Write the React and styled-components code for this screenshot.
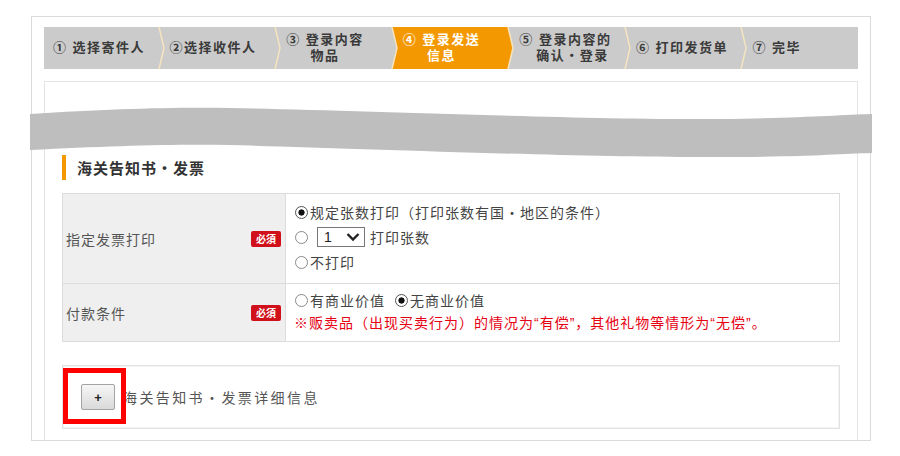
import React from 'react';
import styled, { createGlobalStyle } from 'styled-components';

const GlobalStyle = createGlobalStyle`
  html, body {
    margin: 0;
    padding: 0;
    background: #fff;
  }
  body {
    font-family: "Liberation Sans", "Noto Sans CJK SC", sans-serif;
    color: #444;
  }
`;

const Page = styled.div`
  padding: 16px 0 0 31px;
`;

const Frame = styled.div`
  position: relative;
  box-sizing: border-box;
  width: 840px;
  height: 425px;
  border: 1px solid #dadada;
  padding: 10px 12px 0;
  display: flex;
  flex-direction: column;
  gap: 12px;
`;

const Steps = styled.ol`
  list-style: none;
  margin: 0;
  padding: 0;
  display: flex;
  height: 42px;
`;

const Step = styled.li`
  position: relative;
  flex: 1;
  display: flex;
  align-items: center;
  padding-left: 11px;
  background: ${(p) => (p.$active ? '#f39800' : '#cbcbcb')};
  color: ${(p) => (p.$active ? '#fff' : '#3a3a3a')};
  font-size: 13px;
  font-weight: 700;
  line-height: 16px;
  letter-spacing: 1.5px;
  text-align: center;

  &:first-child {
    padding-left: 9px;
  }
`;

const Arrow = styled.svg`
  position: absolute;
  top: 0;
  right: -6px;
  z-index: 1;
  overflow: visible;
`;

// torn-page band drawn across the frame
const Band = styled.svg`
  position: absolute;
  left: -2px;
  top: 88px;
  z-index: 2;
`;

const Panel = styled.div`
  flex: 1;
  border: 1px solid #e4e4e4;
  border-bottom: none;
  padding: 73px 17px 0;
`;

const SectionTitle = styled.h3`
  margin: 0;
  height: 25px;
  display: flex;
  align-items: center;
  border-left: 4px solid #f39800;
  padding-left: 11px;
  font-size: 15px;
  font-weight: 700;
  color: #333;
  letter-spacing: 1px;
`;

const FormGrid = styled.div`
  margin-top: 13px;
  border: 1px solid #dcdcdc;
  font-size: 14px;
  letter-spacing: 1px;
`;

const Row = styled.div`
  display: grid;
  grid-template-columns: 223px 1fr;
  box-sizing: border-box;
  height: ${(p) => p.$h}px;
  border-bottom: ${(p) => (p.$last ? 'none' : '1px solid #dcdcdc')};
`;

const Label = styled.div`
  display: flex;
  align-items: center;
  justify-content: space-between;
  background: #efefef;
  border-right: 1px solid #dcdcdc;
  padding: 0 4px 0 3px;
  color: #555;
`;

const Badge = styled.span`
  display: inline-flex;
  align-items: center;
  justify-content: center;
  width: 30px;
  height: 16px;
  border-radius: 2px;
  background: #d0101b;
  color: #fff;
  font-size: 10px;
  font-weight: 700;
  letter-spacing: 0;
`;

const Value = styled.div`
  padding: ${(p) => p.$pt}px 0 0 9px;
  color: #444;
`;

const Line = styled.div`
  display: flex;
  align-items: center;
  height: ${(p) => p.$h}px;
  white-space: nowrap;
`;

const Radio = styled.span`
  display: inline-block;
  box-sizing: border-box;
  flex: none;
  width: 13px;
  height: 13px;
  border-radius: 50%;
  border: 1px solid ${(p) => (p.$checked ? '#555' : '#8a8a8a')};
  background: ${(p) =>
    p.$checked ? 'radial-gradient(circle, #111 0 2.8px, #fff 3.4px)' : '#fff'};
  margin: 0 2px 0 ${(p) => p.$ml || 0}px;
`;

const NumSelect = styled.span`
  display: inline-flex;
  align-items: center;
  justify-content: space-between;
  box-sizing: border-box;
  width: 48px;
  height: 20px;
  border: 1px solid #777;
  padding: 0 4px 0 6px;
  margin: 0 5px 0 7px;
  font-size: 14px;
  color: #222;
  letter-spacing: 0;
`;

const Note = styled.span`
  color: #e60012;
  margin-left: -1px;
`;

const DetailBox = styled.div`
  margin-top: 23px;
  height: 64px;
  box-sizing: border-box;
  border: 1px solid #e2e2e2;
  box-shadow: inset 0 0 0 1px #f3f3f3;
  display: flex;
  align-items: center;
  padding-left: 18px;
  gap: 8px;
  font-size: 14px;
  letter-spacing: 2.4px;
  color: #555;
`;

const ToggleWrap = styled.span`
  position: relative;
  display: inline-flex;
`;

const ToggleButton = styled.button`
  width: 34px;
  height: 26px;
  padding: 0;
  border: 1px solid #a3a3a3;
  border-radius: 2px;
  background: linear-gradient(#f6f6f6, #d9d9d9);
  color: #222;
  font-family: "Liberation Sans", sans-serif;
  font-size: 13px;
  font-weight: 700;
`;

const Highlight = styled.span`
  position: absolute;
  left: -18px;
  top: -16px;
  width: 63px;
  height: 56px;
  box-sizing: border-box;
  border: 5px solid #ff0000;
  z-index: 1;
`;

const steps = [
  ['① 选择寄件人'],
  ['②选择收件人'],
  ['③ 登录内容', '物品'],
  ['④ 登录发送', '信息'],
  ['⑤ 登录内容的', '　确认・登录'],
  ['⑥ 打印发货单'],
  ['⑦ 完毕'],
];

function StepArrow({ color }) {
  return (
    <Arrow width="8" height="42" viewBox="0 0 8 42">
      <polygon points="0,0 2,0 7,21 2,42 0,42" fill={color} />
      <polyline points="2,0 7,21 2,42" fill="none" stroke="#f6e4bf" strokeWidth="1.5" />
    </Arrow>
  );
}

function Chevron() {
  return (
    <svg width="14" height="10" viewBox="0 0 14 10">
      <polyline points="1.5,2 7,7.5 12.5,2" fill="none" stroke="#222" strokeWidth="2.4" />
    </svg>
  );
}

export default function App() {
  return (
    <>
      <GlobalStyle />
      <Page>
        <Frame>
          <Steps>
            {steps.map((lines, i) => {
              const active = i === 3;
              return (
                <Step key={i} $active={active}>
                  <span>
                    {lines.map((l, j) => (
                      <div key={j}>{l}</div>
                    ))}
                  </span>
                  {i < steps.length - 1 && <StepArrow color={active ? '#f39800' : '#cbcbcb'} />}
                </Step>
              );
            })}
          </Steps>

          <Band width="842" height="56" viewBox="0 0 842 56">
            <path
              d="M0,9 C80,4 140,2 200,3 C320,5 560,15 690,14 C770,13 810,10 842,9 L842,48 C810,49 770,52 690,52 C560,53 320,43 200,40 C140,39 80,41 0,45 Z"
              fill="#bebebe"
            />
          </Band>

          <Panel>
            <SectionTitle>海关告知书・发票</SectionTitle>

            <FormGrid>
              <Row $h={90}>
                <Label>
                  <span>指定发票打印</span>
                  <Badge>必須</Badge>
                </Label>
                <Value $pt={6}>
                  <Line $h={24}>
                    <Radio $checked />
                    规定张数打印（打印张数有国・地区的条件）
                  </Line>
                  <Line $h={26}>
                    <Radio />
                    <NumSelect>
                      1
                      <Chevron />
                    </NumSelect>
                    打印张数
                  </Line>
                  <Line $h={24}>
                    <Radio />
                    不打印
                  </Line>
                </Value>
              </Row>
              <Row $h={57} $last>
                <Label>
                  <span>付款条件</span>
                  <Badge>必須</Badge>
                </Label>
                <Value $pt={5}>
                  <Line $h={22}>
                    <Radio />
                    有商业价值
                    <Radio $checked $ml={10} />
                    无商业价值
                  </Line>
                  <Line $h={22}>
                    <Note>※贩卖品（出现买卖行为）的情况为“有偿”，其他礼物等情形为“无偿”。</Note>
                  </Line>
                </Value>
              </Row>
            </FormGrid>

            <DetailBox>
              <ToggleWrap>
                <ToggleButton type="button">+</ToggleButton>
                <Highlight />
              </ToggleWrap>
              <span>海关告知书・发票详细信息</span>
            </DetailBox>
          </Panel>
        </Frame>
      </Page>
    </>
  );
}
